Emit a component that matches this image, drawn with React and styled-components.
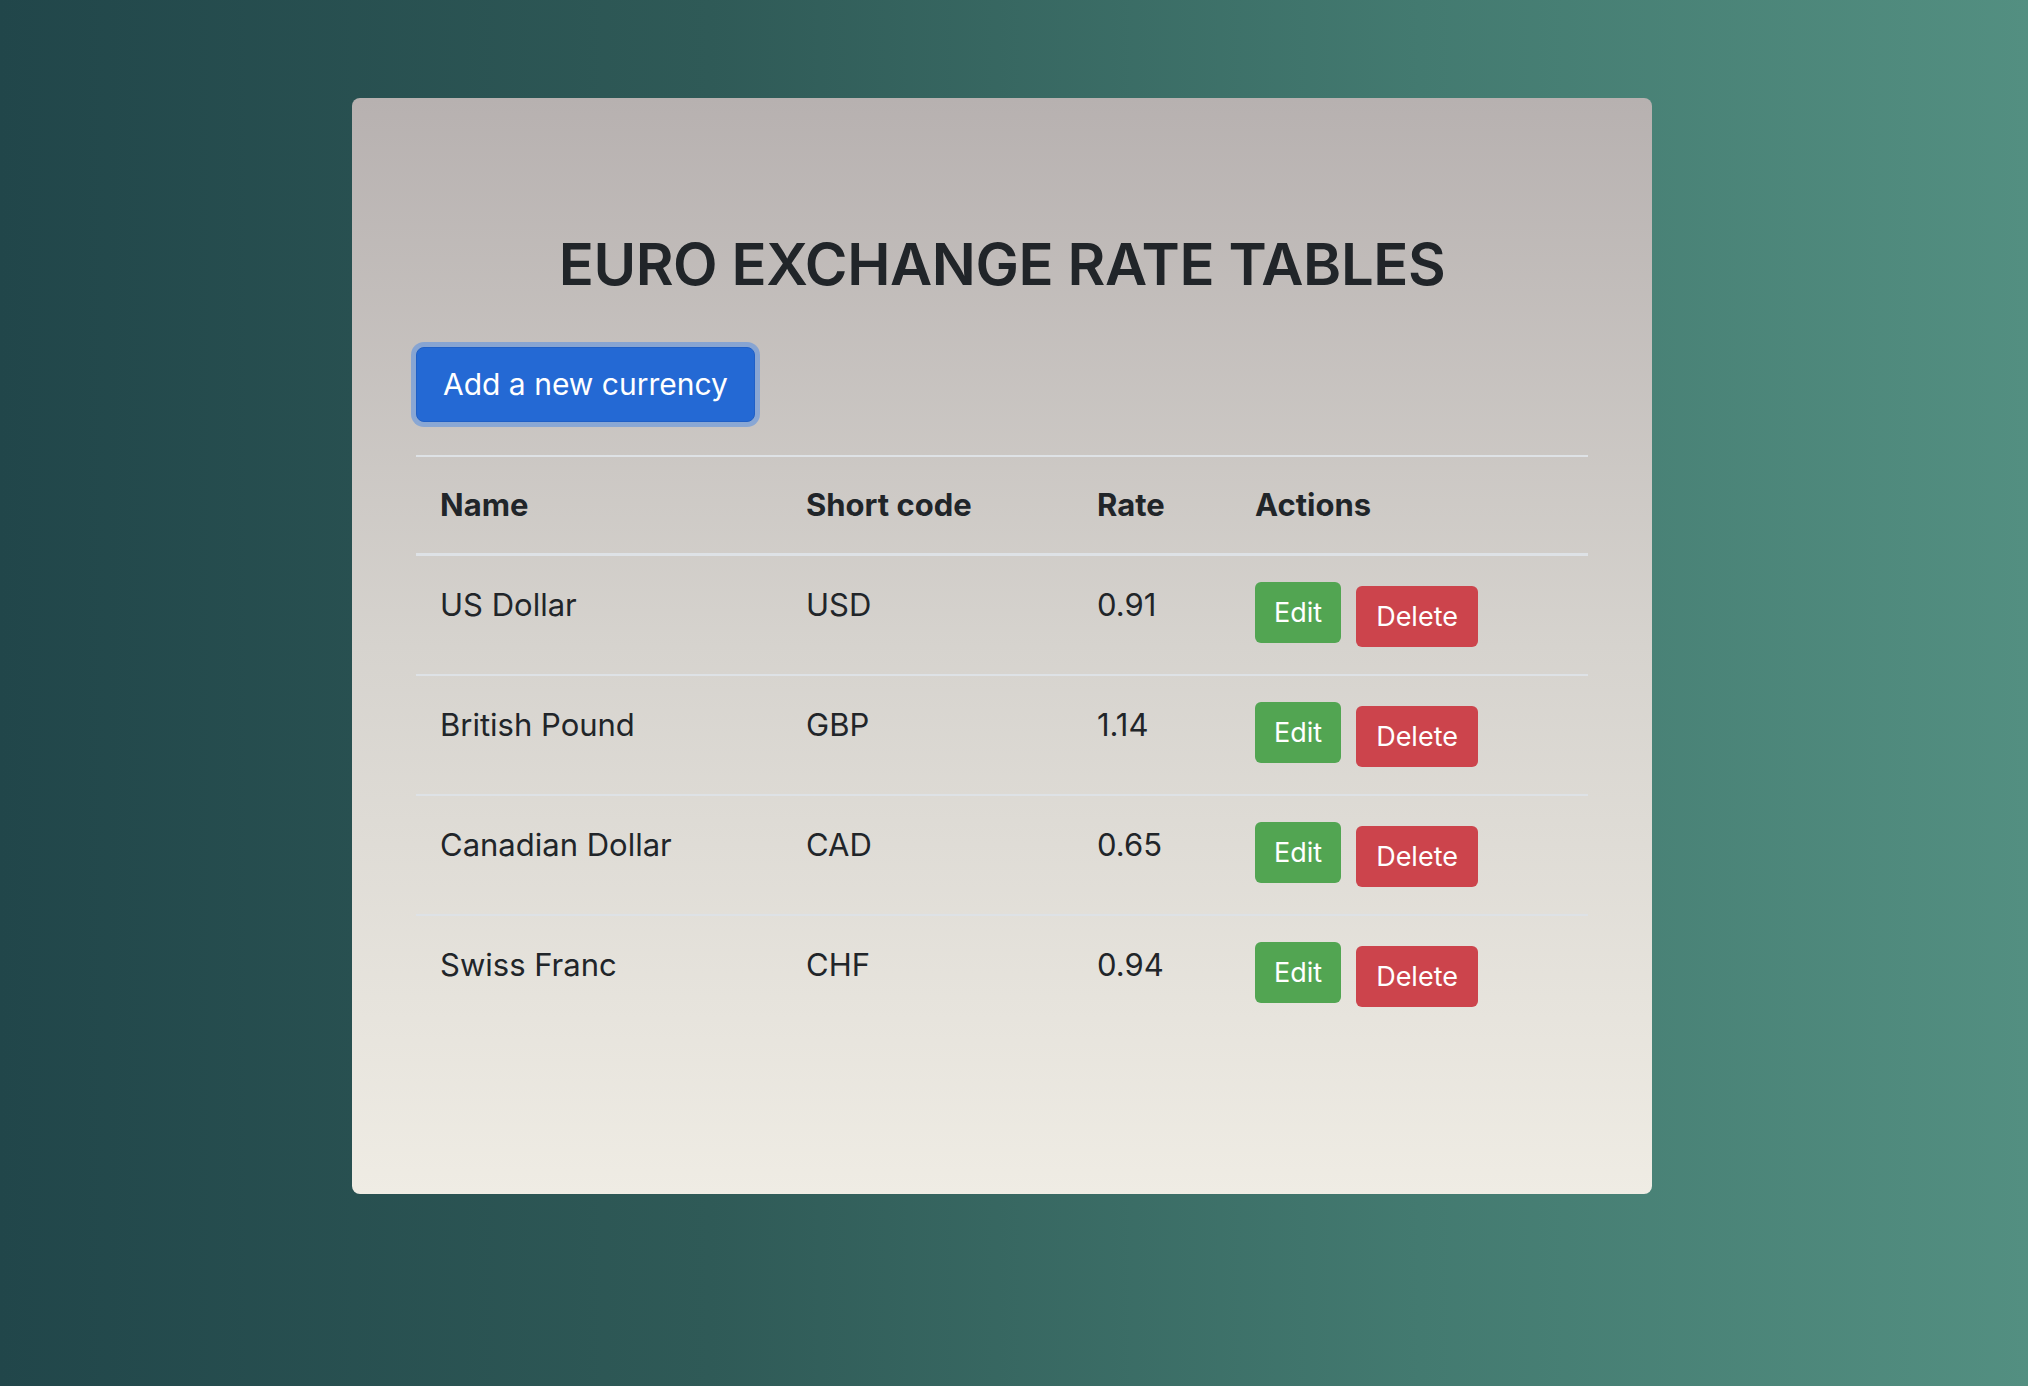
import styled, { createGlobalStyle } from 'styled-components';

const GlobalStyle = createGlobalStyle`
  html, body {
    margin: 0;
    padding: 0;
  }
  body {
    font-family: Inter, "Noto Sans", "Liberation Sans", sans-serif;
    color: #212529;
  }
  * {
    box-sizing: border-box;
  }
`;

const currencies = [
  { id: 1, name: 'US Dollar', code: 'USD', rate: '0.91' },
  { id: 2, name: 'British Pound', code: 'GBP', rate: '1.14' },
  { id: 3, name: 'Canadian Dollar', code: 'CAD', rate: '0.65' },
  { id: 4, name: 'Swiss Franc', code: 'CHF', rate: '0.94' },
];

const Page = styled.div`
  min-height: 100vh;
  display: flex;
  justify-content: center;
  align-items: flex-start;
  padding: 98px 24px 0 0;
  background: linear-gradient(to right, #21464a 0%, #2f5a57 35%, #437a70 70%, #538f81 100%);
`;

const Card = styled.div`
  width: 1300px;
  min-height: 1096px;
  padding: 130px 64px 0;
  border-radius: 8px;
  background: linear-gradient(to bottom, #b7b1b0 0%, #d6d3ce 50%, #efece4 100%);
`;

const Title = styled.h1`
  margin: 0 0 47px 0;
  text-align: center;
  font-size: 58px;
  line-height: 72px;
  font-weight: 600;
  letter-spacing: -0.4px;
  color: #212529;
`;

const AddButton = styled.button`
  display: inline-block;
  margin: 0 0 33px 0;
  padding: 14px 26px;
  font-family: inherit;
  font-size: 30px;
  line-height: 45px;
  font-weight: 400;
  color: #fff;
  background: #2469d4;
  border: 1px solid #1f5fc6;
  border-radius: 8px;
  box-shadow: 0 0 0 5px rgba(60, 130, 235, 0.45);
  cursor: pointer;
`;

const Table = styled.table`
  width: 100%;
  border-collapse: collapse;
  table-layout: fixed;
  border-top: 2px solid #dee2e6;
`;

const HeadCell = styled.th`
  width: ${p => p.$width}px;
  text-align: left;
  padding: 25px 24px 25px;
  font-size: 31px;
  line-height: 46px;
  font-weight: 700;
  border-bottom: 3px solid #dee2e6;
`;

const Row = styled.tr`
  border-bottom: ${p => (p.$last ? 'none' : '2px solid #dee2e6')};
`;

const Cell = styled.td`
  vertical-align: top;
  padding: 26px 24px 27px;
  font-size: 31px;
  line-height: 46px;
`;

const Actions = styled.div`
  display: flex;
  align-items: flex-start;
  gap: 15px;
`;

const ActionButton = styled.button`
  margin-top: ${p => (p.$variant === 'danger' ? 4 : 0)}px;
  padding: 11px ${p => (p.$variant === 'danger' ? 20 : 19)}px;
  font-family: inherit;
  font-size: 27px;
  line-height: 39px;
  color: #fff;
  border: none;
  border-radius: 6px;
  background: ${p => (p.$variant === 'danger' ? '#cc444c' : '#52a552')};
  cursor: pointer;
`;

function App() {
  return (
    <>
      <GlobalStyle />
      <Page>
        <Card>
          <Title>EURO EXCHANGE RATE TABLES</Title>
          <AddButton>Add a new currency</AddButton>
          <Table>
            <thead>
              <tr>
                <HeadCell $width={366}>Name</HeadCell>
                <HeadCell $width={291}>Short code</HeadCell>
                <HeadCell $width={158}>Rate</HeadCell>
                <HeadCell $width={357}>Actions</HeadCell>
              </tr>
            </thead>
            <tbody>
              {currencies.map((c, i) => (
                <Row key={c.id} $last={i === currencies.length - 1}>
                  <Cell>{c.name}</Cell>
                  <Cell>{c.code}</Cell>
                  <Cell>{c.rate}</Cell>
                  <Cell>
                    <Actions>
                      <ActionButton $variant="success">Edit</ActionButton>
                      <ActionButton $variant="danger">Delete</ActionButton>
                    </Actions>
                  </Cell>
                </Row>
              ))}
            </tbody>
          </Table>
        </Card>
      </Page>
    </>
  );
}

export default App;
